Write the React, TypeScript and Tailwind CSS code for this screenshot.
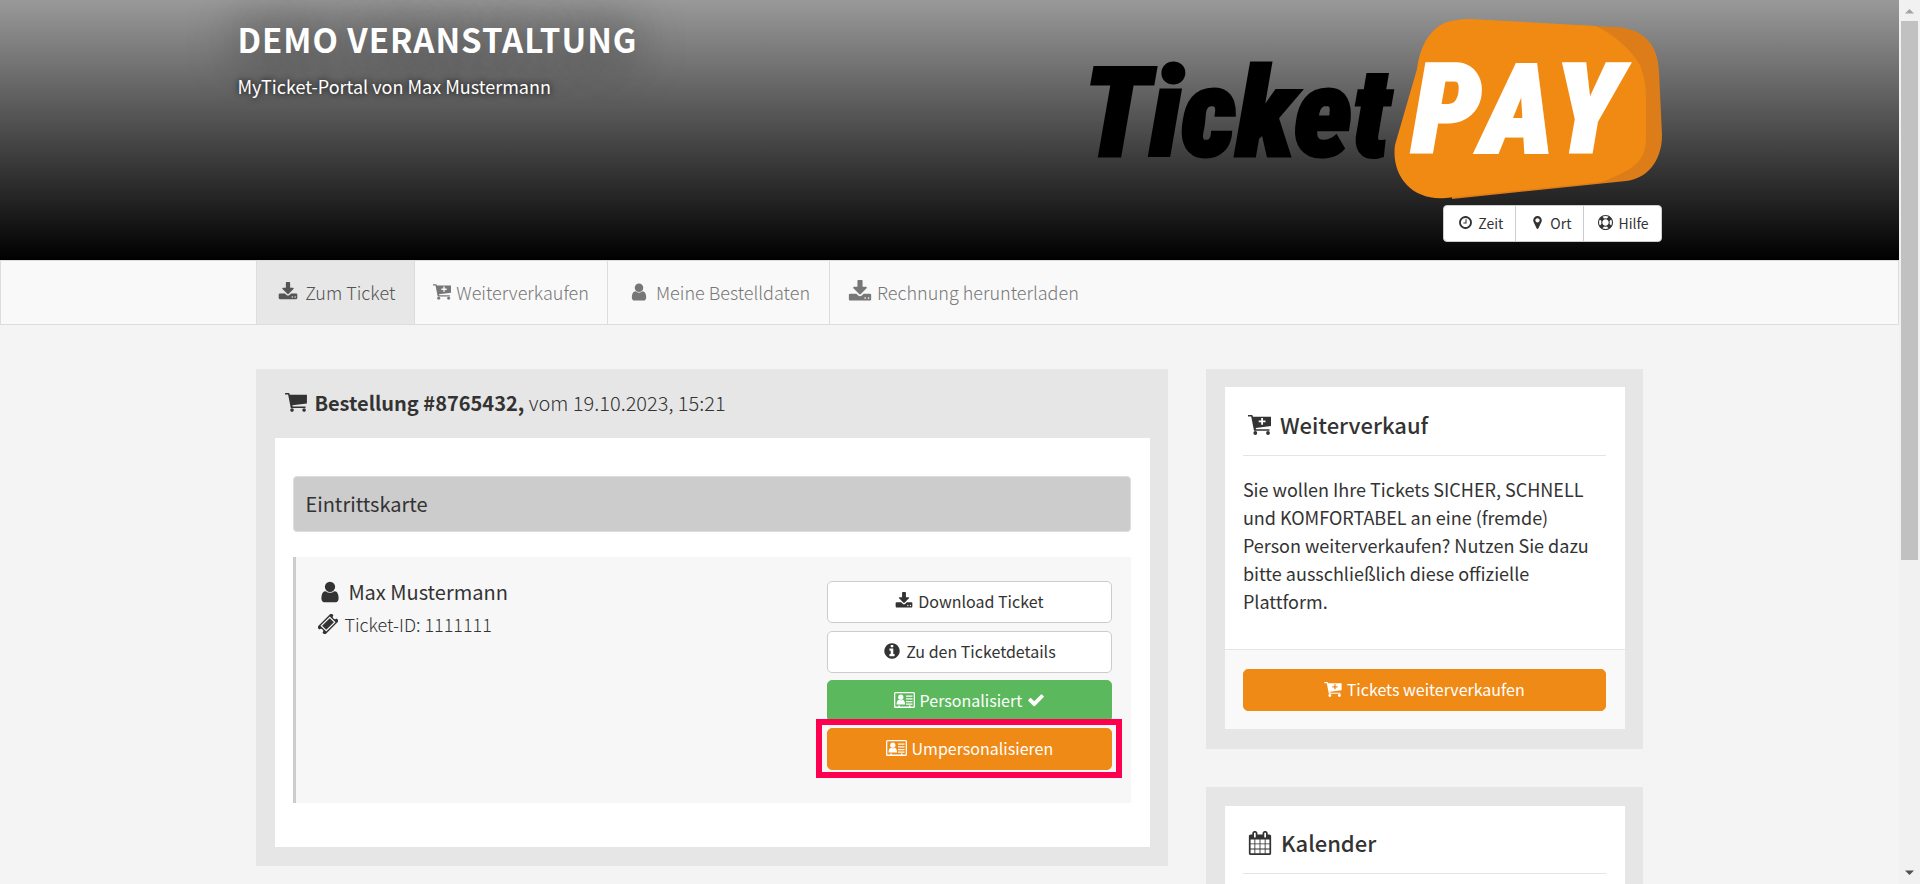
import React from 'react';

// icon outlines on a 1792 unit grid
const ICONS = {
  user: 'M1536 1399q0 109-62.5 187t-150.5 78h-854q-88 0-150.5-78t-62.5-187q0-85 8.5-160.5t31.5-152 58.5-131 94-89 134.5-34.5q131 128 313 128t313-128q76 0 134.5 34.5t94 89 58.5 131 31.5 152 8.5 160.5zm-256-887q0 159-112.5 271.5t-271.5 112.5-271.5-112.5-112.5-271.5 112.5-271.5 271.5-112.5 271.5 112.5 112.5 271.5z',
  clock: 'M1024 544v448q0 14-9 23t-23 9h-320q-14 0-23-9t-9-23v-64q0-14 9-23t23-9h224v-352q0-14 9-23t23-9h64q14 0 23 9t9 23zm416 352q0-148-73-273t-198-198-273-73-273 73-198 198-73 273 73 273 198 198 273 73 273-73 198-198 73-273zm224 0q0 209-103 385.5t-279.5 279.5-385.5 103-385.5-103-279.5-279.5-103-385.5 103-385.5 279.5-279.5 385.5-103 385.5 103 279.5 279.5 103 385.5z',
  marker: 'M1152 640q0-106-75-181t-181-75-181 75-75 181 75 181 181 75 181-75 75-181zm256 0q0 109-33 179l-364 774q-16 33-47.5 52t-67.5 19-67.5-19-46.5-52l-365-774q-33-70-33-179 0-212 150-362t362-150 362 150 150 362z',
  ring: 'M896 0q182 0 348 71t286 191 191 286 71 348-71 348-191 286-286 191-348 71-348-71-286-191-191-286-71-348 71-348 191-286 286-191 348-71zm0 128q-190 0-361 90l194 194q82-28 167-28t167 28l194-194q-171-90-361-90zm-678 1129l194-194q-28-82-28-167t28-167l-194-194q-90 171-90 361t90 361zm678 407q190 0 361-90l-194-194q-82 28-167 28t-167-28l-194 194q171 90 361 90zm0-384q159 0 271.5-112.5t112.5-271.5-112.5-271.5-271.5-112.5-271.5 112.5-112.5 271.5 112.5 271.5 271.5 112.5zm484-217l194 194q90-171 90-361t-90-361l-194 194q28 82 28 167t-28 167z',
  download: 'M1344 1344q0-26-19-45t-45-19-45 19-19 45 19 45 45 19 45-19 19-45zm256 0q0-26-19-45t-45-19-45 19-19 45 19 45 45 19 45-19 19-45zm128-224v320q0 40-28 68t-68 28h-1472q-40 0-68-28t-28-68v-320q0-40 28-68t68-28h465l135 136q58 56 136 56t136-56l136-136h464q40 0 68 28t28 68zm-325-569q17 41-14 70l-448 448q-18 19-45 19t-45-19l-448-448q-31-29-14-70 17-39 59-39h256v-448q0-26 19-45t45-19h256q26 0 45 19t19 45v448h256q42 0 59 39z',
  info: 'M1152 1376v-160q0-14-9-23t-23-9h-96v-512q0-14-9-23t-23-9h-320q-14 0-23 9t-9 23v160q0 14 9 23t23 9h96v320h-96q-14 0-23 9t-9 23v160q0 14 9 23t23 9h448q14 0 23-9t9-23zm-128-896v-160q0-14-9-23t-23-9h-192q-14 0-23 9t-9 23v160q0 14 9 23t23 9h192q14 0 23-9t9-23zm640 416q0 209-103 385.5t-279.5 279.5-385.5 103-385.5-103-279.5-279.5-103-385.5 103-385.5 279.5-279.5 385.5-103 385.5 103 279.5 279.5 103 385.5z',
  check: 'M1671 566q0 40-28 68l-724 724-136 136q-28 28-68 28t-68-28l-136-136-362-362q-28-28-28-68t28-68l136-136q28-28 68-28t68 28l294 295 656-657q28-28 68-28t68 28l136 136q28 28 28 68z',
  calendar: 'M192 1664h288v-288h-288v288zm352 0h320v-288h-320v288zm-352-352h288v-320h-288v320zm352 0h320v-320h-320v320zm-352-384h288v-288h-288v288zm736 736h320v-288h-320v288zm-384-736h320v-288h-320v288zm768 736h288v-288h-288v288zm-384-352h320v-320h-320v320zm-352-864v-288q0-13-9.5-22.5t-22.5-9.5h-64q-13 0-22.5 9.5t-9.5 22.5v288q0 13 9.5 22.5t22.5 9.5h64q13 0 22.5-9.5t9.5-22.5zm736 864h288v-320h-288v320zm-384-384h320v-288h-320v288zm384 0h288v-288h-288v288zm32-480v-288q0-13-9.5-22.5t-22.5-9.5h-64q-13 0-22.5 9.5t-9.5 22.5v288q0 13 9.5 22.5t22.5 9.5h64q13 0 22.5-9.5t9.5-22.5zm384-64v1280q0 52-38 90t-90 38h-1408q-52 0-90-38t-38-90v-1280q0-52 38-90t90-38h128v-96q0-66 47-113t113-47h64q66 0 113 47t47 113v96h384v-96q0-66 47-113t113-47h64q66 0 113 47t47 113v96h128q52 0 90 38t38 90z',
};

type IconProps = { className?: string };

const Icon: React.FC<IconProps & { name: keyof typeof ICONS }> = ({ name, className }) => (
  <svg viewBox="0 0 1792 1792" fill="currentColor" aria-hidden="true" className={`shrink-0 ${className ?? ''}`}>
    <path d={ICONS[name]} />
  </svg>
);

const Cart: React.FC<IconProps & { plus?: boolean }> = ({ plus, className }) => (
  <svg viewBox="0 0 23 20" fill="currentColor" aria-hidden="true" className={`shrink-0 ${className ?? ''}`}>
    <path
      fillRule="evenodd"
      d={
        plus
          ? 'M0 0h4.200l.9 1.800H23V11L7.700 13l.3 1.200H21.500v1.600H6L3.200 1.600H0zM13.200 3v2.500h-2.500v1.800h2.500v2.500h1.800V7.300h2.500V5.500H15V3z'
          : 'M0 0h4.200l.9 1.800H23V11L7.700 13l.3 1.200H21.500v1.600H6L3.200 1.600H0z'
      }
    />
    <circle cx="7.300" cy="18" r="1.900" />
    <circle cx="20" cy="18" r="1.900" />
  </svg>
);

const Ticket: React.FC<IconProps> = ({ className }) => (
  <svg viewBox="0 0 20 20" aria-hidden="true" className={`shrink-0 ${className ?? ''}`}>
    <g transform="rotate(-45 10 10)">
      <path fill="currentColor" d="M0 4.500h20v3.300a2.200 2.200 0 0 0 0 4.400v3.300H0v-3.300a2.200 2.200 0 0 0 0-4.400z" />
      <rect x="4" y="6.500" width="12" height="7" fill="none" stroke="#f7f7f7" strokeWidth="1.200" />
    </g>
  </svg>
);

const IdCard: React.FC<IconProps> = ({ className }) => (
  <svg viewBox="0 0 21 16" fill="currentColor" aria-hidden="true" className={`shrink-0 ${className ?? ''}`}>
    <path fillRule="evenodd" d="M1.500 0h18A1.500 1.500 0 0 1 21 1.500v13a1.500 1.500 0 0 1-1.500 1.500h-18A1.500 1.500 0 0 1 0 14.500v-13A1.500 1.500 0 0 1 1.500 0zM1.300 1.300v13.200h3v-.9h1.600v.9h9v-.9h1.600v.9h3.200V1.300z" />
    <circle cx="6.800" cy="5.200" r="2.600" />
    <path d="M2.500 12.600c0-2.600 1-4.500 2.500-4.900q1.800 1.200 3.600 0c1.500.4 2.500 2.300 2.500 4.900zM12 3.500h6.500v1.300H12zM12 6.200h6.500v1.300H12zM12 8.900h6.500v1.300H12zM12 11.500h6.500v1.200H12z" />
  </svg>
);

const Logo: React.FC = () => (
  <svg viewBox="-24 0 600 184" role="img" aria-label="TicketPAY" className="h-[184px] w-[600px]">
    <path fill="#dd7d1a" d="M370 3 530 10C560 12 572 30 573 54L576 118C576 145 560 162 540 164L366 182z" />
    <path fill="#f18a13" d="M372 3Q376 2 384 2L510 9C530 19 546 34 554 48C558 58 560 70 560 80V120C560 145 548 152 516 165L360 181C325 184 305 158 309 128L331 52C335 22 350 4 372 3z" />
    <text x="-3" y="139" fill="#000" stroke="#000" strokeWidth="3" fontSize="124" className="font-['Roboto_Condensed',Roboto,sans-serif] font-black italic">
      Ticket
    </text>
    <text x="326" y="135" fill="#fff" stroke="#fff" strokeWidth="3" fontSize="124" className="font-['Roboto_Condensed',Roboto,sans-serif] font-black italic [font-kerning:none]">
      PAY
    </text>
  </svg>
);

const headerLinks = [
  { label: 'Zeit', icon: 'clock' },
  { label: 'Ort', icon: 'marker' },
  { label: 'Hilfe', icon: 'ring' },
] as const;

const Header: React.FC = () => (
  <header className="h-[260px] bg-[linear-gradient(#999,#000)] text-white">
    <div className="mx-auto flex w-3/4 justify-between">
      <div className="pt-[18px]">
        <h1 className="text-[33px] leading-[42px] font-bold tracking-[1px] [text-shadow:0_0_50px_#000]">DEMO VERANSTALTUNG</h1>
        <p className="mt-3 text-lg leading-7 [text-shadow:0_0_6px_#000]">MyTicket-Portal von Max Mustermann</p>
      </div>
      <div className="flex flex-col items-end pt-[17px]">
        <Logo />
        <div className="mt-1 flex h-[37px] divide-x divide-[#ccc] overflow-hidden rounded border border-[#ccc] bg-white text-sm text-[#333]">
          {headerLinks.map(link => (
            <button key={link.label} className="flex items-center gap-[5px] pr-3 pb-[2px] pl-[14px]">
              <Icon name={link.icon} className="size-[15px]" />
              {link.label}
            </button>
          ))}
        </div>
      </div>
    </div>
  </header>
);

const Nav: React.FC = () => (
  <nav className="border border-[#ddd] bg-[#f9f9f9] text-lg font-light text-[#777]">
    <ul className="mx-auto flex h-[63px] w-3/4 divide-x divide-[#ddd] px-[18px]">
      <li className="border-l border-[#ddd] bg-[#e7e7e7] text-[#555]">
        <a href="#ticket" className="flex h-full items-center gap-[7px] pr-[19px] pb-[2px] pl-[21px]">
          <Icon name="download" className="size-5" />
          Zum Ticket
        </a>
      </li>
      <li>
        <a href="#verkauf" className="flex h-full items-center gap-[5px] px-[18px] pb-[2px]">
          <Cart plus className="h-4 w-[18px]" />
          Weiterverkaufen
        </a>
      </li>
      <li>
        <a href="#daten" className="flex h-full items-center gap-[7px] pr-[19px] pb-[2px] pl-[21px]">
          <Icon name="user" className="size-5" />
          Meine Bestelldaten
        </a>
      </li>
      <li>
        <a href="#rechnung" className="flex h-full items-center gap-[5px] px-[18px] pb-[2px]">
          <Icon name="download" className="size-6" />
          Rechnung herunterladen
        </a>
      </li>
    </ul>
  </nav>
);

const button = 'flex h-[42px] w-full items-center justify-center gap-[5px] rounded-[5px] border pb-[2px] text-base';

const Order: React.FC = () => (
  <section className="bg-[#e6e6e6] pr-[18px] pb-[19px] pl-[19px]">
    <h2 className="flex h-[69px] items-center gap-[7px] px-[10px] pb-[2px] text-xl font-light text-[#333]">
      <Cart className="h-[19px] w-[22px]" />
      <span>
        <b className="font-bold">Bestellung #8765432,</b> vom 19.10.2023, 15:21
      </span>
    </h2>
    <div className="bg-white pt-[38px] pr-[19px] pb-11 pl-[18px]">
      <h3 className="rounded border border-[#ddd] bg-[#ccc] px-[11px] text-xl leading-[54px]">Eintrittskarte</h3>
      <div className="mt-[25px] flex min-h-[246px] justify-between border-l-[3px] border-[#ccc] bg-[#f7f7f7] pr-[19px] pl-[22px]">
        <div className="pt-[23px]">
          <p className="flex items-center gap-[6px] text-xl leading-6">
            <Icon name="user" className="size-6" />
            Max Mustermann
          </p>
          <p className="mt-2 flex items-center gap-[6px] text-lg leading-6 font-light">
            <Ticket className="size-5" />
            Ticket-ID: 1111111
          </p>
        </div>
        <div className="flex w-[285px] flex-col pt-6">
          <button className={`${button} border-[#ccc] bg-white`}>
            <Icon name="download" className="size-[18px]" />
            Download Ticket
          </button>
          <button className={`${button} mt-2 border-[#ccc] bg-white`}>
            <Icon name="info" className="size-[18px]" />
            Zu den Ticketdetails
          </button>
          <button className={`${button} mt-[7px] border-[#5cb85c] bg-[#5cb85c] text-white`}>
            <IdCard className="h-4 w-[21px]" />
            Personalisiert
            <Icon name="check" className="size-[18px]" />
          </button>
          <div className="relative mt-[6px]">
            <button className={`${button} border-[#f08a17] bg-[#f08a17] text-white`}>
              <IdCard className="h-4 w-[21px]" />
              Umpersonalisieren
            </button>
            <span className="pointer-events-none absolute -top-[9px] -right-[10px] -bottom-2 -left-[11px] border-[6px] border-[#ff0050]" />
          </div>
        </div>
      </div>
    </div>
  </section>
);

const Sidebar: React.FC = () => (
  <aside className="space-y-[38px]">
    <section className="bg-[#e6e6e6] pt-[18px] pr-[18px] pb-5 pl-[19px]">
      <div className="bg-white pr-[19px] pb-[34px] pl-[18px]">
        <h2 className="flex h-[69px] items-center gap-[9px] border-b border-[#e5e5e5] px-[5px] pt-[6px] text-[22px] font-medium">
          <Cart plus className="mt-[2px] h-5 w-[23px]" />
          Weiterverkauf
        </h2>
        <p className="mt-[19px] text-lg leading-7">
          Sie wollen Ihre Tickets SICHER, SCHNELL und KOMFORTABEL an eine (fremde) Person weiterverkaufen? Nutzen Sie dazu bitte
          ausschließlich diese offizielle Plattform.
        </p>
      </div>
      <div className="border-t border-[#e5e5e5] bg-[#f9f9f9] pt-[19px] pr-[19px] pb-[18px] pl-[18px]">
        <button className={`${button} border-[#f08a17] bg-[#f08a17] text-white`}>
          <Cart plus className="h-[15px] w-[18px]" />
          Tickets weiterverkaufen
        </button>
      </div>
    </section>
    <section className="bg-[#e6e6e6] pt-[19px] pr-[18px] pl-[19px]">
      <div className="h-40 bg-white pr-[19px] pl-[18px]">
        <h2 className="flex h-[68px] items-center gap-[9px] border-b border-[#e5e5e5] px-[5px] pt-[6px] text-[22px] font-medium">
          <Icon name="calendar" className="size-6" />
          Kalender
        </h2>
      </div>
    </section>
  </aside>
);

const Scrollbar: React.FC = () => (
  <div className="flex w-[21px] shrink-0 flex-col items-center justify-between bg-[#f1f1f1]">
    <svg viewBox="0 0 17 21" className="h-[21px] w-[17px]" aria-hidden="true">
      <path fill="#a3a3a3" d="M4 13.500 8.500 9l4.500 4.500z" />
    </svg>
    <div className="mb-auto h-[61%] w-[17px] bg-[#c1c1c1]" />
    <svg viewBox="0 0 17 21" className="h-[21px] w-[17px]" aria-hidden="true">
      <path fill="#505050" d="M4 7.500 8.500 12 13 7.500z" />
    </svg>
  </div>
);

export default function App() {
  return (
    <div className="flex h-screen overflow-hidden font-['Noto_Sans_CJK_SC',sans-serif] text-[#333]">
      <div className="min-w-0 flex-1 overflow-hidden bg-[#f4f4f4]">
        <Header />
        <Nav />
        <main className="mx-auto mt-11 grid w-3/4 grid-cols-3 items-start gap-x-[38px] px-[19px]">
          <div className="col-span-2">
            <Order />
          </div>
          <Sidebar />
        </main>
      </div>
      <Scrollbar />
    </div>
  );
}
